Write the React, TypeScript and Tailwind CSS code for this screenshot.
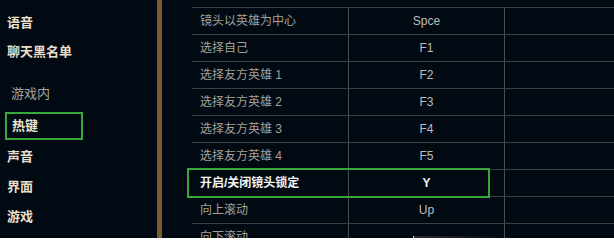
const FONT = { fontFamily: '"Liberation Sans", "Noto Sans CJK SC", sans-serif' }

const rows = [
  { action: '镜头以英雄为中心', key: 'Spce' },
  { action: '选择自己', key: 'F1' },
  { action: '选择友方英雄 1', key: 'F2' },
  { action: '选择友方英雄 2', key: 'F3' },
  { action: '选择友方英雄 3', key: 'F4' },
  { action: '选择友方英雄 4', key: 'F5' },
  { action: '开启/关闭镜头锁定', key: 'Y', active: true },
  { action: '向上滚动', key: 'Up' },
  { action: '向下滚动', key: '' },
]

export default function App() {
  return (
    <div className="w-[614px] h-[238px] bg-[#010a13] flex overflow-hidden" style={FONT}>
      {/* sidebar */}
      <div className="w-[157px] flex flex-col pt-[8px]">
        <div className="h-[29px] flex items-center pl-[7px] text-[13px] font-bold text-[#e6dfca]">语音</div>
        <div className="h-[29px] flex items-center pl-[7px] text-[13px] font-bold text-[#e6dfca]">聊天黑名单</div>
        <div className="h-[28px] mt-[14px] flex items-center pl-[11px] text-[13px] text-[#a8a59c]">游戏内</div>
        <div className="h-[28px] w-[78px] ml-[5px] mt-[4px] border-2 border-[#38a83c] flex items-center pl-[5px] text-[13px] font-bold text-[#ece6d4]">热键</div>
        <div className="h-[30px] mt-[2px] flex items-center pl-[7px] text-[13px] font-bold text-[#e6dfca]">声音</div>
        <div className="h-[30px] flex items-center pl-[7px] text-[13px] font-bold text-[#e6dfca]">界面</div>
        <div className="h-[30px] flex items-center pl-[7px] text-[13px] font-bold text-[#e6dfca]">游戏</div>
      </div>

      {/* scroll rail */}
      <div className="w-[5px] bg-[#7a5c2e]" />

      {/* hotkey table */}
      <div className="ml-[30px] flex-1 pt-[7px]">
        <div className="border-t border-[#3a3f46]">
          {rows.map((r, i) => (
            <div key={i} className="relative h-[27px] flex border-b border-[#3a3f46] text-[12px]">
              <div className={`w-[156px] flex items-center pl-[8px] ${r.active ? 'font-bold text-[#f2f2f2]' : 'text-[#a4a19a]'}`}>
                {r.action}
              </div>
              <div className={`w-[156px] border-l border-[#4a4f56] flex items-center justify-center ${r.active ? 'font-bold text-[#f2f2f2]' : 'text-[#bdbdbd]'}`}>
                {i === rows.length - 1 ? (
                  <div className="w-full flex items-center pl-[64px] pt-[8px]">
                    <span className="w-px h-[10px] bg-[#c8c8c8]" />
                    <span className="h-[10px] w-[100px] bg-gradient-to-r from-[#2a2e33] to-transparent" />
                  </div>
                ) : r.key}
              </div>
              <div className="flex-1 border-l border-[#4a4f56]" />
              {r.active && (
                <div className="absolute left-[-5px] top-[-2px] w-[303px] h-[30px] border-2 border-[#38a83c]" />
              )}
            </div>
          ))}
        </div>
      </div>
    </div>
  )
}
